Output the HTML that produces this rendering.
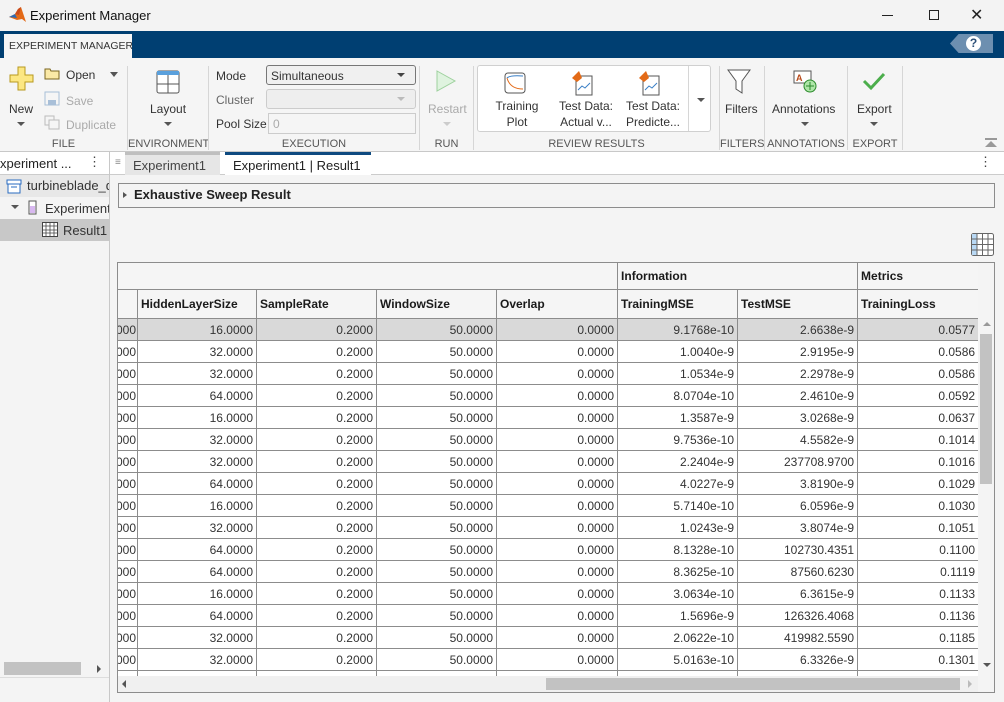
<!DOCTYPE html>
<html><head><meta charset="utf-8"><style>
*{box-sizing:border-box;margin:0;padding:0}
body{width:1004px;height:702px;overflow:hidden;background:#f0f0f0;font-family:"Liberation Sans",sans-serif;font-size:12px;color:#212121;position:relative}
.a{position:absolute}
.lbl{position:absolute;font-size:11px;color:#555;text-align:center}
.t{font-size:12px;color:#333}
.dis{color:#aaa}
.sep{position:absolute;top:66px;width:1px;height:84px;background:#d6d6d6}
table{border-collapse:collapse;table-layout:fixed}
td{border:1px solid #8c8c8c;height:22px;padding:0 3px;text-align:right;font-size:12px;color:#333;white-space:nowrap;overflow:hidden;background:#fff}
td.f{direction:rtl;padding:0 1px 0 0;text-align:left}
tr.h td{background:#f5f5f5;font-weight:bold;text-align:left;color:#1a1a1a}
tr.s td{background:#d9d9d9}
</style></head><body>
<!-- title bar -->
<div class="a" style="left:0;top:0;width:1004px;height:31px;background:#f3f3f3"></div>
<svg class="a" style="left:9px;top:7px" width="18" height="16" viewBox="0 0 18 16"><path d="M0 10 L6 7 L9 2 L12 0 L17 15 L13 12 L8 13 Z" fill="#e36a17"/><path d="M0 10 L6 7 L8 11 Z" fill="#2b6ab5"/><path d="M6 7 L9 2 L12 0 L10 8Z" fill="#c9491b"/></svg>
<div class="a" style="left:30px;top:8px;font-size:13px;color:#111">Experiment Manager</div>
<div class="a" style="left:882px;top:15px;width:11px;height:1px;background:#222"></div>
<div class="a" style="left:929px;top:10px;width:10px;height:10px;border:1px solid #222"></div>
<div class="a" style="left:970px;top:5px;font-size:16px;color:#222">✕</div>
<!-- blue strip -->
<div class="a" style="left:0;top:31px;width:1004px;height:27px;background:#003f72"></div>
<div class="a" style="left:4px;top:34px;width:128px;height:24px;background:#f5f5f5;font-size:10.5px;color:#333;padding:6px 0 0 5px;white-space:nowrap;overflow:hidden">EXPERIMENT MANAGER</div>
<div class="a" style="left:950px;top:34px;width:43px;height:19px;background:#6d8fb0;clip-path:polygon(20% 0,100% 0,100% 100%,20% 100%,0 50%)"></div>
<div class="a" style="left:966px;top:36px;width:15px;height:15px;border-radius:50%;background:#fff;color:#2c4f77;font-weight:bold;font-size:12px;text-align:center;line-height:15px">?</div>
<!-- toolstrip -->
<div class="a" style="left:0;top:58px;width:1004px;height:94px;background:#f5f5f5;border-bottom:1px solid #c8c8c8"></div>
<svg class="a" style="left:9px;top:66px" width="25" height="25" viewBox="0 0 25 25"><path d="M9 1h7v8h8v7h-8v8h-7v-8h-8v-7h8z" fill="#fce783" stroke="#b8991e"/></svg>
<div class="a t" style="left:9px;top:102px">New</div>
<div class="a" style="left:17px;top:122px;border:4px solid transparent;border-top:4px solid #555"></div>
<svg class="a" style="left:44px;top:67px" width="17" height="13"><path d="M1 2h5l1 2h8v8h-14z" fill="#fbe9a6" stroke="#7a6520"/></svg>
<div class="a t" style="left:66px;top:68px">Open</div>
<div class="a" style="left:110px;top:72px;border:4px solid transparent;border-top:5px solid #555"></div>
<svg class="a" style="left:44px;top:91px" width="16" height="15"><rect x="1" y="1" width="14" height="13" fill="none" stroke="#a8bfd8"/><rect x="4" y="9" width="8" height="5" fill="#a8bfd8"/></svg>
<div class="a t dis" style="left:66px;top:94px">Save</div>
<svg class="a" style="left:44px;top:115px" width="16" height="15"><rect x="1" y="1" width="9" height="9" fill="none" stroke="#bbb"/><rect x="5" y="5" width="10" height="9" fill="#f5f5f5" stroke="#bbb"/></svg>
<div class="a t dis" style="left:66px;top:118px">Duplicate</div>
<div class="lbl" style="left:0;top:138px;width:127px">FILE</div>
<div class="sep" style="left:127px"></div>
<svg class="a" style="left:156px;top:70px" width="24" height="24"><rect x="1" y="1" width="22" height="22" rx="2" fill="#fff" stroke="#555"/><rect x="1" y="1" width="22" height="4" fill="#5aa0dc"/><line x1="12" y1="5" x2="12" y2="23" stroke="#555"/><line x1="1" y1="14" x2="23" y2="14" stroke="#555"/></svg>
<div class="a t" style="left:150px;top:102px">Layout</div>
<div class="a" style="left:164px;top:122px;border:4px solid transparent;border-top:4px solid #555"></div>
<div class="lbl" style="left:128px;top:138px;width:80px">ENVIRONMENT</div>
<div class="sep" style="left:208px"></div>
<div class="a t" style="left:216px;top:69px">Mode</div>
<div class="a t" style="left:216px;top:93px;color:#666">Cluster</div>
<div class="a t" style="left:216px;top:117px">Pool Size</div>
<div class="a" style="left:266px;top:65px;width:150px;height:20px;border:1px solid #777;border-radius:3px;background:#f0f0f0;padding:3px 4px" ><span class="t">Simultaneous</span></div>
<div class="a" style="left:397px;top:73px;border:4px solid transparent;border-top:4px solid #444"></div>
<div class="a" style="left:266px;top:89px;width:150px;height:20px;border:1px solid #ccc;border-radius:3px;background:#eee"></div>
<div class="a" style="left:397px;top:97px;border:4px solid transparent;border-top:4px solid #bbb"></div>
<div class="a" style="left:268px;top:113px;width:148px;height:21px;border:1px solid #ccc;background:#f5f5f5;padding:3px 4px;color:#aaa">0</div>
<div class="lbl" style="left:209px;top:138px;width:210px">EXECUTION</div>
<div class="sep" style="left:419px"></div>
<svg class="a" style="left:435px;top:69px" width="22" height="24"><path d="M2 2 L20 12 L2 22Z" fill="#dff3df" stroke="#9ed19e"/></svg>
<div class="a t dis" style="left:428px;top:102px">Restart</div>
<div class="a" style="left:443px;top:122px;border:4px solid transparent;border-top:4px solid #ccc"></div>
<div class="lbl" style="left:420px;top:138px;width:53px">RUN</div>
<div class="sep" style="left:473px"></div>
<div class="a" style="left:477px;top:65px;width:234px;height:67px;border:1px solid #d0d0d0;border-radius:3px;background:#fff"></div>
<div class="a" style="left:688px;top:66px;width:1px;height:65px;background:#d6d6d6"></div>
<div class="a" style="left:697px;top:98px;border:4px solid transparent;border-top:4px solid #555"></div>
<svg class="a" style="left:504px;top:72px" width="22" height="22"><rect x="1" y="1" width="20" height="20" rx="3" fill="#fff" stroke="#555"/><path d="M3 6 Q6 3 19 4" stroke="#3a7fc6" fill="none"/><path d="M3 6 Q6 17 19 17" stroke="#e36a17" fill="none"/></svg>
<div class="a t" style="left:487px;top:98px;width:60px;text-align:center;line-height:16px">Training<br>Plot</div>
<svg class="a" style="left:570px;top:70px" width="24" height="26"><rect x="6" y="6" width="16" height="19" fill="#fff" stroke="#555"/><path d="M8 20l4-4 3 2 5-5" stroke="#3a7fc6" fill="none"/><path d="M2 8 L9 1 L12 8 L7 12Z" fill="#e36a17"/></svg>
<div class="a t" style="left:553px;top:98px;width:66px;text-align:center;line-height:16px">Test Data:<br>Actual v...</div>
<svg class="a" style="left:637px;top:70px" width="24" height="26"><rect x="6" y="6" width="16" height="19" fill="#fff" stroke="#555"/><path d="M8 20l4-4 3 2 5-5" stroke="#3a7fc6" fill="none"/><path d="M2 8 L9 1 L12 8 L7 12Z" fill="#e36a17"/></svg>
<div class="a t" style="left:620px;top:98px;width:66px;text-align:center;line-height:16px">Test Data:<br>Predicte...</div>
<div class="lbl" style="left:474px;top:138px;width:245px">REVIEW RESULTS</div>
<div class="sep" style="left:719px"></div>
<svg class="a" style="left:727px;top:69px" width="24" height="26"><path d="M1 1h22l-8 11v12l-6-4v-8z" fill="#fff" stroke="#555"/></svg>
<div class="a t" style="left:725px;top:102px">Filters</div>
<div class="lbl" style="left:720px;top:138px;width:44px">FILTERS</div>
<div class="sep" style="left:764px"></div>
<svg class="a" style="left:793px;top:70px" width="26" height="24"><rect x="1" y="1" width="17" height="12" fill="#fff" stroke="#555"/><text x="3" y="11" font-size="9" fill="#b84a1a" font-family="Liberation Sans" font-weight="bold">A</text><circle cx="17" cy="16" r="6" fill="#aee6a8" stroke="#2b8a2b"/><path d="M17 12v8M13 16h8" stroke="#2b8a2b"/></svg>
<div class="a t" style="left:772px;top:102px">Annotations</div>
<div class="a" style="left:801px;top:122px;border:4px solid transparent;border-top:4px solid #555"></div>
<div class="lbl" style="left:765px;top:138px;width:82px">ANNOTATIONS</div>
<div class="sep" style="left:847px"></div>
<svg class="a" style="left:862px;top:71px" width="24" height="20"><path d="M2 10l7 7L22 3" stroke="#4cae4c" stroke-width="3" fill="none"/></svg>
<div class="a t" style="left:857px;top:102px">Export</div>
<div class="a" style="left:870px;top:122px;border:4px solid transparent;border-top:4px solid #555"></div>
<div class="lbl" style="left:848px;top:138px;width:54px">EXPORT</div>
<div class="sep" style="left:902px"></div>
<div class="a" style="left:985px;top:138px;width:12px;height:2px;background:#999"></div>
<div class="a" style="left:985px;top:141px;border:6px solid transparent;border-bottom:6px solid #999;border-top:0"></div>
<!-- doc tabs row -->
<div class="a" style="left:0;top:152px;width:1004px;height:23px;background:#fff;border-bottom:1px solid #ccc"></div>
<div class="a" style="left:0;top:156px;font-size:13px;color:#222">xperiment ...</div>
<div class="a" style="left:88px;top:154px;font-size:13px;color:#444">⋮</div>
<div class="a" style="left:109px;top:152px;width:1px;height:550px;background:#c8c8c8"></div>
<div class="a" style="left:115px;top:157px;font-size:10px;color:#888">≡</div>
<div class="a" style="left:125px;top:152px;width:95px;height:23px;background:#e6e6e6;border-top:3px solid #bfbfbf;padding:3px 0 0 8px;font-size:13px;color:#444">Experiment1 <span style="color:#777">✕</span></div>
<div class="a" style="left:225px;top:152px;width:146px;height:23px;background:#fff;border-top:3px solid #0e4a80;padding:3px 0 0 8px;font-size:13px;color:#222">Experiment1 | Result1 <span style="color:#555">✕</span></div>
<div class="a" style="left:979px;top:154px;font-size:13px;color:#444">⋮</div>
<!-- left panel -->
<div class="a" style="left:0;top:175px;width:109px;height:527px;background:#f4f4f4"></div>
<div class="a" style="left:0;top:175px;width:109px;height:22px;background:#e8e8e8"></div>
<svg class="a" style="left:6px;top:178px" width="16" height="16"><rect x="1" y="2" width="14" height="4" fill="#fff" stroke="#2a6bc0"/><rect x="2" y="6" width="12" height="9" fill="#fff" stroke="#2a6bc0"/><line x1="5" y1="9" x2="11" y2="9" stroke="#2a6bc0"/></svg>
<div class="a" style="left:27px;top:178px;font-size:13px;color:#333;width:82px;overflow:hidden;white-space:nowrap">turbineblade_data</div>
<div class="a" style="left:11px;top:205px;border:4px solid transparent;border-top:4px solid #555"></div>
<svg class="a" style="left:27px;top:200px" width="12" height="16"><rect x="2" y="1" width="7" height="13" fill="#fff" stroke="#555"/><rect x="3" y="6" width="5" height="7" fill="#d8b8f0"/></svg>
<div class="a" style="left:45px;top:201px;font-size:13px;color:#333;width:64px;overflow:hidden;white-space:nowrap">Experiment1</div>
<div class="a" style="left:0;top:219px;width:109px;height:22px;background:#c8c8c8"></div>
<svg class="a" style="left:42px;top:222px" width="16" height="15"><rect x="0.5" y="0.5" width="15" height="14" fill="#fff" stroke="#444"/><path d="M4 1v13M8 1v13M12 1v13M1 4h14M1 8h14M1 11h14" stroke="#444" stroke-width="0.8"/></svg>
<div class="a" style="left:63px;top:223px;font-size:13px;color:#333">Result1</div>
<div class="a" style="left:4px;top:662px;width:77px;height:13px;background:#c2c2c2"></div>
<div class="a" style="left:97px;top:665px;border:4px solid transparent;border-left:4px solid #555"></div>
<div class="a" style="left:0;top:677px;width:109px;height:1px;background:#ddd"></div>
<!-- main area -->
<div class="a" style="left:110px;top:175px;width:894px;height:527px;background:#f4f4f4"></div>
<div class="a" style="left:118px;top:183px;width:877px;height:25px;border:1px solid #8c8c8c;background:#f4f4f4"></div>
<div class="a" style="left:123px;top:192px;border:3px solid transparent;border-left:4px solid #555"></div>
<div class="a" style="left:134px;top:187px;font-size:13px;font-weight:bold;color:#222">Exhaustive Sweep Result</div>
<svg class="a" style="left:971px;top:233px" width="23" height="23"><rect x="0.5" y="0.5" width="22" height="22" rx="2" fill="#fff" stroke="#666"/><rect x="1" y="1" width="5" height="21" fill="#b9d9f5"/><path d="M6 1v21M11.5 1v21M17 1v21M1 6h21M1 11.5h21M1 17h21" stroke="#666"/></svg>
<div class="a" style="left:117px;top:262px;width:878px;height:431px;border:1px solid #8c8c8c;background:#f4f4f4"></div>
<div class="a" style="left:118px;top:263px;width:860px;height:413px;overflow:hidden;background:#fff">
<table style="position:absolute;left:-1px;top:-1px;width:861px">
<colgroup><col style="width:20px"><col style="width:119px"><col style="width:120px"><col style="width:120px"><col style="width:121px"><col style="width:120px"><col style="width:120px"><col style="width:121px"></colgroup>
<tr class="h"><td colspan="5" style="height:27px"></td><td colspan="2" style="height:27px">Information</td><td style="height:27px">Metrics</td></tr>
<tr class="h"><td style="height:29px"></td><td>HiddenLayerSize</td><td>SampleRate</td><td>WindowSize</td><td>Overlap</td><td>TrainingMSE</td><td>TestMSE</td><td>TrainingLoss</td></tr>
<tr class="s"><td class="f">1.0000</td><td>16.0000</td><td>0.2000</td><td>50.0000</td><td>0.0000</td><td>9.1768e-10</td><td>2.6638e-9</td><td>0.0577</td></tr>
<tr><td class="f">1.0000</td><td>32.0000</td><td>0.2000</td><td>50.0000</td><td>0.0000</td><td>1.0040e-9</td><td>2.9195e-9</td><td>0.0586</td></tr>
<tr><td class="f">1.0000</td><td>32.0000</td><td>0.2000</td><td>50.0000</td><td>0.0000</td><td>1.0534e-9</td><td>2.2978e-9</td><td>0.0586</td></tr>
<tr><td class="f">1.0000</td><td>64.0000</td><td>0.2000</td><td>50.0000</td><td>0.0000</td><td>8.0704e-10</td><td>2.4610e-9</td><td>0.0592</td></tr>
<tr><td class="f">1.0000</td><td>16.0000</td><td>0.2000</td><td>50.0000</td><td>0.0000</td><td>1.3587e-9</td><td>3.0268e-9</td><td>0.0637</td></tr>
<tr><td class="f">1.0000</td><td>32.0000</td><td>0.2000</td><td>50.0000</td><td>0.0000</td><td>9.7536e-10</td><td>4.5582e-9</td><td>0.1014</td></tr>
<tr><td class="f">1.0000</td><td>32.0000</td><td>0.2000</td><td>50.0000</td><td>0.0000</td><td>2.2404e-9</td><td>237708.9700</td><td>0.1016</td></tr>
<tr><td class="f">1.0000</td><td>64.0000</td><td>0.2000</td><td>50.0000</td><td>0.0000</td><td>4.0227e-9</td><td>3.8190e-9</td><td>0.1029</td></tr>
<tr><td class="f">1.0000</td><td>16.0000</td><td>0.2000</td><td>50.0000</td><td>0.0000</td><td>5.7140e-10</td><td>6.0596e-9</td><td>0.1030</td></tr>
<tr><td class="f">1.0000</td><td>32.0000</td><td>0.2000</td><td>50.0000</td><td>0.0000</td><td>1.0243e-9</td><td>3.8074e-9</td><td>0.1051</td></tr>
<tr><td class="f">1.0000</td><td>64.0000</td><td>0.2000</td><td>50.0000</td><td>0.0000</td><td>8.1328e-10</td><td>102730.4351</td><td>0.1100</td></tr>
<tr><td class="f">1.0000</td><td>64.0000</td><td>0.2000</td><td>50.0000</td><td>0.0000</td><td>8.3625e-10</td><td>87560.6230</td><td>0.1119</td></tr>
<tr><td class="f">1.0000</td><td>16.0000</td><td>0.2000</td><td>50.0000</td><td>0.0000</td><td>3.0634e-10</td><td>6.3615e-9</td><td>0.1133</td></tr>
<tr><td class="f">1.0000</td><td>64.0000</td><td>0.2000</td><td>50.0000</td><td>0.0000</td><td>1.5696e-9</td><td>126326.4068</td><td>0.1136</td></tr>
<tr><td class="f">1.0000</td><td>32.0000</td><td>0.2000</td><td>50.0000</td><td>0.0000</td><td>2.0622e-10</td><td>419982.5590</td><td>0.1185</td></tr>
<tr><td class="f">1.0000</td><td>32.0000</td><td>0.2000</td><td>50.0000</td><td>0.0000</td><td>5.0163e-10</td><td>6.3326e-9</td><td>0.1301</td></tr>
<tr><td class="f">1.0000</td><td>64.0000</td><td>0.2000</td><td>50.0000</td><td>0.0000</td><td>1.4107e-9</td><td>1.9396e-9</td><td>0.1318</td></tr>
</table></div>
<!-- vertical scrollbar -->
<div class="a" style="left:983px;top:322px;border:4px solid transparent;border-bottom:4px solid #999;border-top:0"></div>
<div class="a" style="left:980px;top:334px;width:12px;height:150px;background:#c2c2c2"></div>
<div class="a" style="left:983px;top:663px;border:4px solid transparent;border-top:4px solid #555"></div>
<!-- horizontal scrollbar -->
<div class="a" style="left:118px;top:676px;width:860px;height:16px;background:#f0f0f0"></div>
<div class="a" style="left:122px;top:680px;border:4px solid transparent;border-right:4px solid #555;border-left:0"></div>
<div class="a" style="left:546px;top:678px;width:414px;height:12px;background:#c2c2c2"></div>
<div class="a" style="left:968px;top:680px;border:4px solid transparent;border-left:4px solid #bbb;border-right:0"></div>
</body></html>
